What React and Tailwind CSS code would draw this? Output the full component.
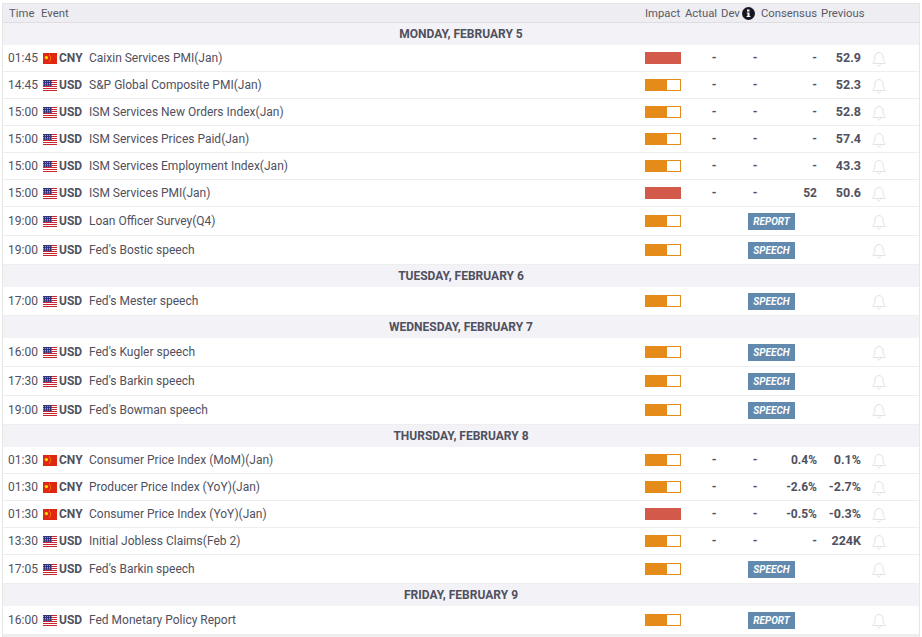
// App.jsx
const CN = 'CNY';
const US = 'USD';

const days = [
  {
    title: 'MONDAY, FEBRUARY 5',
    rows: [
      { time: '01:45', cur: CN, name: 'Caixin Services PMI(Jan)', impact: 'high', actual: '-', dev: '-', cons: '-', prev: '52.9' },
      { time: '14:45', cur: US, name: 'S&P Global Composite PMI(Jan)', impact: 'med', actual: '-', dev: '-', cons: '-', prev: '52.3' },
      { time: '15:00', cur: US, name: 'ISM Services New Orders Index(Jan)', impact: 'med', actual: '-', dev: '-', cons: '-', prev: '52.8' },
      { time: '15:00', cur: US, name: 'ISM Services Prices Paid(Jan)', impact: 'med', actual: '-', dev: '-', cons: '-', prev: '57.4' },
      { time: '15:00', cur: US, name: 'ISM Services Employment Index(Jan)', impact: 'med', actual: '-', dev: '-', cons: '-', prev: '43.3' },
      { time: '15:00', cur: US, name: 'ISM Services PMI(Jan)', impact: 'high', actual: '-', dev: '-', cons: '52', prev: '50.6' },
      { time: '19:00', cur: US, name: 'Loan Officer Survey(Q4)', impact: 'med', tag: 'REPORT' },
      { time: '19:00', cur: US, name: "Fed's Bostic speech", impact: 'med', tag: 'SPEECH' },
    ],
  },
  {
    title: 'TUESDAY, FEBRUARY 6',
    rows: [{ time: '17:00', cur: US, name: "Fed's Mester speech", impact: 'med', tag: 'SPEECH' }],
  },
  {
    title: 'WEDNESDAY, FEBRUARY 7',
    rows: [
      { time: '16:00', cur: US, name: "Fed's Kugler speech", impact: 'med', tag: 'SPEECH' },
      { time: '17:30', cur: US, name: "Fed's Barkin speech", impact: 'med', tag: 'SPEECH' },
      { time: '19:00', cur: US, name: "Fed's Bowman speech", impact: 'med', tag: 'SPEECH' },
    ],
  },
  {
    title: 'THURSDAY, FEBRUARY 8',
    rows: [
      { time: '01:30', cur: CN, name: 'Consumer Price Index (MoM)(Jan)', impact: 'med', actual: '-', dev: '-', cons: '0.4%', prev: '0.1%' },
      { time: '01:30', cur: CN, name: 'Producer Price Index (YoY)(Jan)', impact: 'med', actual: '-', dev: '-', cons: '-2.6%', prev: '-2.7%' },
      { time: '01:30', cur: CN, name: 'Consumer Price Index (YoY)(Jan)', impact: 'high', actual: '-', dev: '-', cons: '-0.5%', prev: '-0.3%' },
      { time: '13:30', cur: US, name: 'Initial Jobless Claims(Feb 2)', impact: 'med', actual: '-', dev: '-', cons: '-', prev: '224K' },
      { time: '17:05', cur: US, name: "Fed's Barkin speech", impact: 'med', tag: 'SPEECH' },
    ],
  },
  {
    title: 'FRIDAY, FEBRUARY 9',
    rows: [{ time: '16:00', cur: US, name: 'Fed Monetary Policy Report', impact: 'med', tag: 'REPORT' }],
  },
];

function FlagCN() {
  return (
    <svg width="14" height="11" viewBox="0 0 14 11" className="block">
      <rect width="14" height="11" fill="#de2910" />
      <circle cx="3.4" cy="4.6" r="1.7" fill="#ffde00" />
      <rect x="6" y="1.6" width="1" height="1" fill="#f7b500" />
      <rect x="7" y="3.4" width="1" height="1" fill="#f7b500" />
      <rect x="7" y="5.600" width="1" height="1" fill="#f7b500" />
      <rect x="6" y="7.500" width="1" height="1" fill="#f7b500" />
    </svg>
  );
}

function FlagUS() {
  return (
    <svg width="14" height="11" viewBox="0 0 14 11" className="block">
      <rect width="14" height="11" fill="#fff" />
      <rect y="0" width="14" height="1" fill="#c9252c" />
      <rect y="2" width="14" height="1" fill="#c9252c" />
      <rect y="4" width="14" height="1" fill="#c9252c" />
      <rect y="6" width="14" height="1" fill="#c9252c" />
      <rect y="8" width="14" height="1" fill="#c9252c" />
      <rect y="10" width="14" height="1" fill="#c9252c" />
      <rect width="9" height="6" fill="#34347c" />
      <path d="M0 1.500h9M0 3.500h9M0 5h9" stroke="#c4c4e4" strokeWidth="0.700" strokeDasharray="1 1" />
    </svg>
  );
}

function Bell() {
  return (
    <svg width="14" height="16" viewBox="0 0 14 16" fill="none" stroke="#e2e2e4" strokeWidth="1" className="block">
      <path d="M7 1.500c-2.600 0-4 2-4 4.400 0 2.600-.6 4.200-2 5.600v1h12v-1c-1.400-1.400-2-3-2-5.600 0-2.400-1.400-4.400-4-4.400z" />
      <path d="M5.500 13.500c.2 1 .8 1.500 1.500 1.500s1.300-.5 1.500-1.500" />
    </svg>
  );
}

function InfoIcon() {
  return (
    <svg width="13" height="13" viewBox="0 0 13 13" className="block">
      <circle cx="6.500" cy="6.500" r="6.500" fill="#17171f" />
      <rect x="5" y="2.500" width="2.500" height="2" fill="#fff" />
      <path d="M4.800 5.500h2.700v3.400h.9V10H4.600V8.900h.9V6.600h-.7z" fill="#fff" />
    </svg>
  );
}

function Impact({ level }) {
  if (level === 'high') return <div className="h-3 w-9 bg-[#d35a4a]" />;
  return (
    <div className="flex h-3 w-9 border border-[#e58b1a] bg-white">
      <div className="h-full w-[21px] bg-[#e58b1a]" />
    </div>
  );
}

function Row({ row }) {
  return (
    <div className={`flex items-center border-b border-[#eeeeee] bg-white text-[12px] text-[#50505e] ${row.tag ? 'h-[29px]' : 'h-[27px]'}`}>
      <div className="w-[40px] pl-[5px]">{row.time}</div>
      <div className="w-[16px]">{row.cur === CN ? <FlagCN /> : <FlagUS />}</div>
      <div className="w-[30px] font-bold">{row.cur}</div>
      <div className="w-[556px] truncate">{row.name}</div>
      <div className="w-[36px]"><Impact level={row.impact} /></div>
      {row.tag ? (
        <>
          <div className="w-[67px]" />
          <div className="flex h-[17px] w-[47px] items-center justify-center bg-[#6289ae] text-[10px] font-bold italic text-white">{row.tag}</div>
          <div className="w-[66px]" />
        </>
      ) : (
        <>
          <div className="w-[66px] text-center font-bold">{row.actual}</div>
          <div className="w-[16px] text-center font-bold">{row.dev}</div>
          <div className="w-[54px] text-right font-bold">{row.cons}</div>
          <div className="w-[44px] text-right text-[12.5px] font-bold">{row.prev}</div>
        </>
      )}
      <div className="ml-[11px] mt-[2px] w-[14px]"><Bell /></div>
    </div>
  );
}

export default function App() {
  return (
    <div className="h-[637px] overflow-hidden bg-white pt-[3px] pl-[2px] font-['Roboto',sans-serif]">
      <div className="w-[918px] border-x border-t border-[#e6e6e6]">
        <div className="flex h-[19px] items-center border-b border-[#dedee2] bg-[#ededf2] text-[11.3px] text-[#5a5a66]">
          <div className="w-[38px] pl-[6px] pt-[2px]">Time</div>
          <div className="w-[604px] pt-[2px]">Event</div>
          <div className="w-[40px] pt-[2px]">Impact</div>
          <div className="w-[36px] pt-[2px]">Actual</div>
          <div className="w-[21px] pt-[2px]">Dev</div>
          <div className="w-[19px] pt-[1px]"><InfoIcon /></div>
          <div className="w-[60px] pt-[2px]">Consensus</div>
          <div className="pt-[2px]">Previous</div>
        </div>
        {days.map((day) => (
          <div key={day.title}>
            <div className="flex h-[22px] items-center justify-center bg-[#f2f2f7] text-[12px] font-bold text-[#50505e]">{day.title}</div>
            {day.rows.map((row, i) => <Row key={i} row={row} />)}
          </div>
        ))}
        <div className="h-[3px] bg-[#eeeeee]" />
      </div>
    </div>
  );
}
